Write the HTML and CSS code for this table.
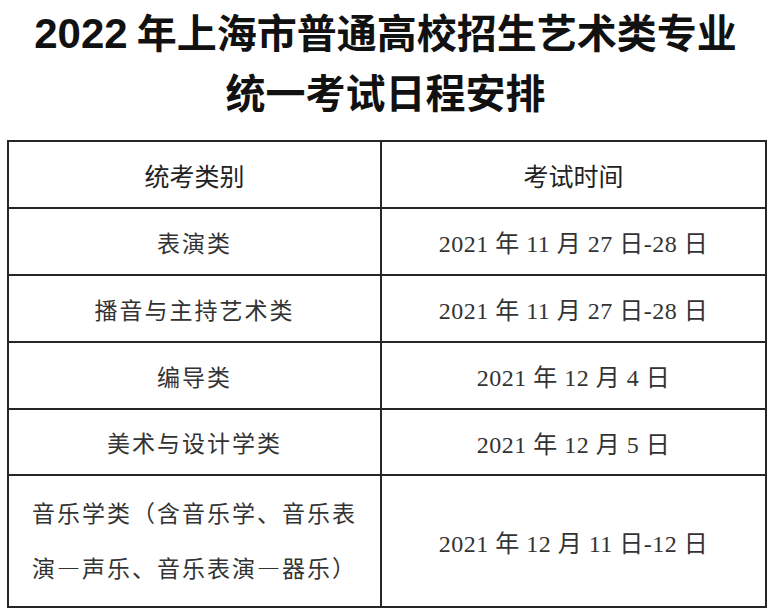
FILE: index.html
```html
<!DOCTYPE html>
<html lang="zh-CN">
<head>
<meta charset="utf-8">
<link rel="stylesheet" href="styles.css">
</head>
<body>
<div class="title">
  <div class="t1"><span class="num">2022</span> 年上海市普通高校招生艺术类专业</div>
  <div class="t2">统一考试日程安排</div>
</div>
<div class="grid">
  <div class="cell head">统考类别</div>
  <div class="cell head">考试时间</div>
  <div class="cell cat">表演类</div>
  <div class="cell date">2021 年 11 月 27 日-28 日</div>
  <div class="cell cat">播音与主持艺术类</div>
  <div class="cell date">2021 年 11 月 27 日-28 日</div>
  <div class="cell cat">编导类</div>
  <div class="cell date">2021 年 12 月 4 日</div>
  <div class="cell cat">美术与设计学类</div>
  <div class="cell date">2021 年 12 月 5 日</div>
  <div class="cell cat multi">音乐学类（含音乐学、音乐表<br>演—声乐、音乐表演—器乐）</div>
  <div class="cell date">2021 年 12 月 11 日-12 日</div>
</div>
</body>
</html>
```
FILE: styles.css
```css
html, body {
  margin: 0;
  padding: 0;
  background: #ffffff;
}
body {
  width: 771px;
  height: 612px;
  overflow: hidden;
}
.title {
  padding-top: 1px;
  font-family: "Noto Sans CJK SC", sans-serif;
  font-weight: 700;
  font-size: 40px;
  line-height: 60px;
  text-align: center;
  color: #111;
}
.t1, .t2 {
  height: 60px;
  overflow: hidden;
}
.title .num {
  font-family: "Liberation Sans Narrow", "Liberation Sans", sans-serif;
  font-size: 42px;
  font-weight: 700;
  line-height: 1;
}
.grid {
  margin: 19px 0 0 7px;
  width: 760px;
  box-sizing: border-box;
  display: grid;
  grid-template-columns: 371px 383px;
  grid-template-rows: 65px 65px 65px 65px 64px 130px;
  gap: 2px;
  padding: 2px;
  background: #262626;
}
.cell {
  background: #fff;
  display: flex;
  align-items: center;
  justify-content: center;
  text-align: center;
  color: #333;
}
.head {
  font-family: "Noto Sans CJK SC", sans-serif;
  font-size: 25px;
  color: #222;
}
.cat {
  font-family: "Noto Sans CJK SC", sans-serif;
  font-size: 23px;
  letter-spacing: 2px;
  font-weight: 400;
}
.multi {
  line-height: 55px;
  padding-bottom: 2px;
}
.date {
  font-family: "Liberation Serif", "Noto Sans CJK SC", serif;
  font-size: 24px;
  letter-spacing: 0.5px;
}
```
